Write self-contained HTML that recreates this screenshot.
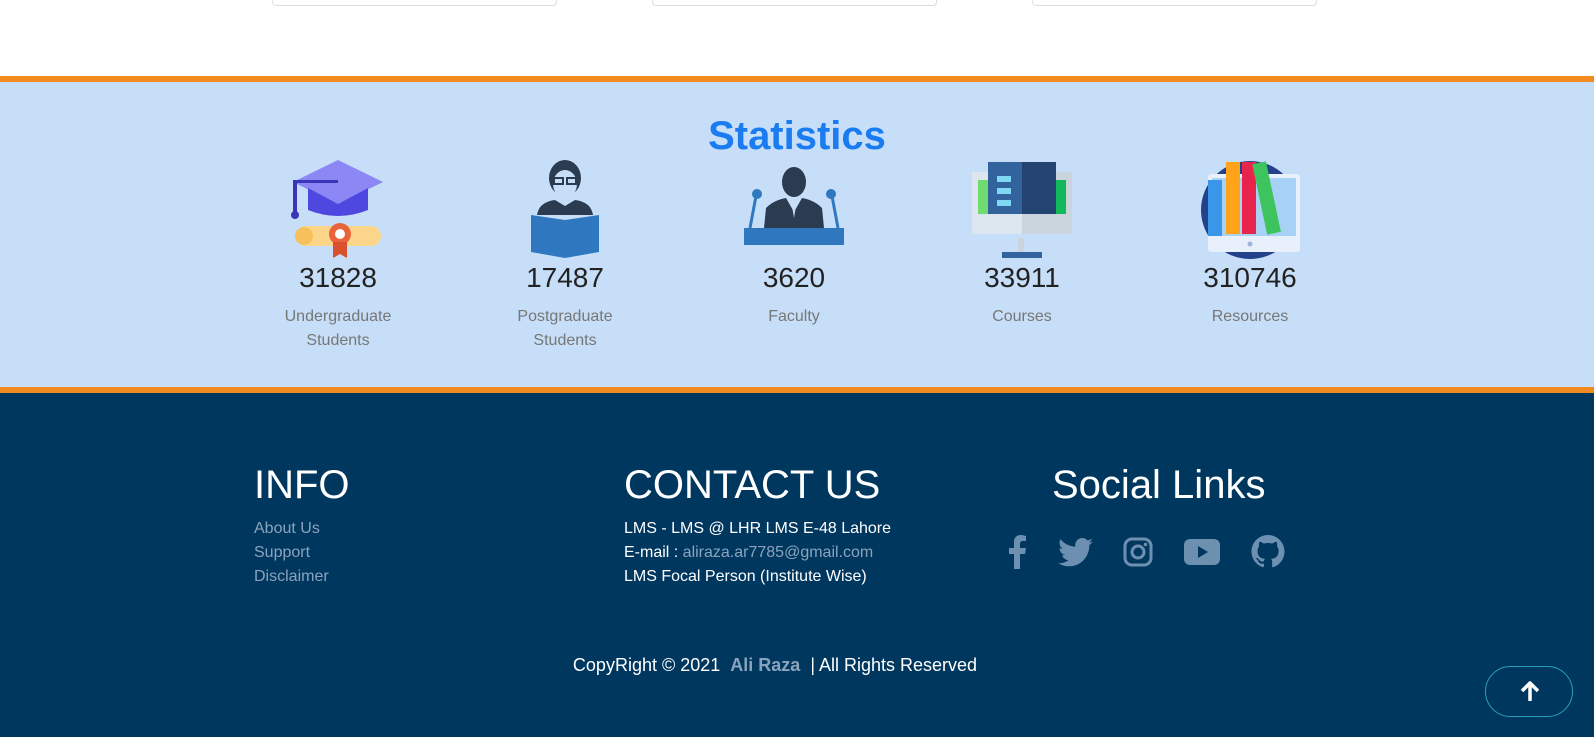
<!DOCTYPE html>
<html><head><meta charset="utf-8"><style>
*{margin:0;padding:0;box-sizing:border-box}
body{width:1594px;height:737px;overflow:hidden;font-family:"Liberation Sans",sans-serif;background:#fff;position:relative}
.card{position:absolute;top:-2px;height:8px;border:1px solid #ddd;border-top:none;border-radius:0 0 4px 4px;background:#fff}
.stats{position:absolute;top:76px;left:0;width:1594px;height:317px;background:#c6def7;border-top:6px solid #f28a1f;border-bottom:6px solid #f28a1f}
.title{position:absolute;top:32px;width:100%;text-align:center;color:#1a7cf0;font-weight:bold;font-size:40px}
.col{position:absolute;top:78px;width:200px;text-align:center}
.col svg{display:block;margin:0 auto;width:100px;height:100px}
.num{font-size:28px;color:#222;margin-top:2px;height:36px}
.lbl{font-size:16px;color:#777;line-height:24px;margin-top:7px}
.foot{position:absolute;top:393px;left:0;width:1594px;height:344px;background:#00375f;color:#fff}
h2{position:absolute;font-weight:normal;font-size:40px;top:70px}
.links{position:absolute;top:124px;font-size:16px;line-height:24px}
.links a{color:#8aa3bd;display:block;text-decoration:none}
.ic{position:absolute;top:142px}
.copy{position:absolute;top:262px;width:100%;text-align:center;font-size:18px;padding-right:44px}
.btn{position:absolute;left:1485px;top:273px;width:88px;height:51px;border:1px solid #2aa0b8;border-radius:26px}
</style></head><body>
<div class="card" style="left:272px;width:285px"></div>
<div class="card" style="left:652px;width:285px"></div>
<div class="card" style="left:1032px;width:285px"></div>
<div class="stats">
<div class="title">Statistics</div>
<div class="col" style="left:238px"><svg viewBox="0 0 100 100"><polygon points="50,0 95,22 50,44 5,22" fill="#8c87f5"/><path d="M20 28 L20 50 Q50 62 80 50 L80 28 L50 44Z" fill="#4e48e0"/><rect x="5" y="20" width="45" height="3" fill="#3b35b8"/><rect x="5" y="20" width="4" height="35" fill="#3b35b8"/><circle cx="7" cy="55" r="4" fill="#3b35b8"/><rect x="8" y="66" width="85" height="20" rx="10" fill="#fbd68a"/><circle cx="16" cy="76" r="9" fill="#f6c05a"/><circle cx="52" cy="74" r="11" fill="#e9643c"/><circle cx="52" cy="74" r="5" fill="#fff"/><path d="M45 82 L45 98 L52 94 L59 98 L59 82Z" fill="#d9502c"/></svg><div class="num">31828</div><div class="lbl">Undergraduate<br>Students</div></div>
<div class="col" style="left:465px"><svg viewBox="0 0 100 100"><ellipse cx="50" cy="18" rx="16" ry="18" fill="#2b3b50"/><ellipse cx="50" cy="24" rx="12" ry="14" fill="#c6def7"/><rect x="39" y="18" width="9" height="6" fill="none" stroke="#2b3b50" stroke-width="2"/><rect x="52" y="18" width="9" height="6" fill="none" stroke="#2b3b50" stroke-width="2"/><path d="M22 55 Q24 42 40 40 L50 46 L60 40 Q76 42 78 55Z" fill="#2b3b50"/><path d="M16 55 L50 60 L84 55 L84 92 L50 98 L16 92Z" fill="#2f78c0"/></svg><div class="num">17487</div><div class="lbl">Postgraduate<br>Students</div></div>
<div class="col" style="left:694px"><svg viewBox="0 0 100 100"><ellipse cx="50" cy="22" rx="12" ry="15" fill="#2b3b50"/><path d="M20 68 L22 48 Q30 40 42 38 L50 52 L58 38 Q70 40 78 48 L80 68Z" fill="#2b3b50"/><path d="M47 40 L50 58 L53 40" fill="#c6def7"/><path d="M6 68 L12 36 M94 68 L88 36" stroke="#2f78c0" stroke-width="3"/><circle cx="13" cy="34" r="5" fill="#2f78c0"/><circle cx="87" cy="34" r="5" fill="#2f78c0"/><rect x="0" y="68" width="100" height="17" fill="#2f78c0"/></svg><div class="num">3620</div><div class="lbl">Faculty</div></div>
<div class="col" style="left:922px"><svg viewBox="0 0 100 100"><rect x="0" y="12" width="100" height="62" fill="#dbe6ee"/><rect x="50" y="12" width="50" height="62" fill="#c9d4dc"/><rect x="6" y="20" width="88" height="34" fill="#6fdc6f"/><rect x="50" y="20" width="44" height="34" fill="#12b859"/><rect x="16" y="2" width="34" height="52" fill="#33639c"/><rect x="50" y="2" width="34" height="52" fill="#234470"/><rect x="25" y="16" width="14" height="6" fill="#7fd9f5"/><rect x="25" y="28" width="14" height="6" fill="#7fd9f5"/><rect x="25" y="40" width="14" height="6" fill="#7fd9f5"/><rect x="46" y="78" width="6" height="14" fill="#c9d4dc"/><rect x="30" y="92" width="40" height="6" fill="#33639c"/></svg><div class="num">33911</div><div class="lbl">Courses</div></div>
<div class="col" style="left:1150px"><svg viewBox="0 0 100 100"><circle cx="50" cy="50" r="49" fill="#23408a"/><rect x="8" y="14" width="92" height="78" rx="3" fill="#e8f0fb"/><rect x="12" y="18" width="84" height="58" fill="#a8d2f5"/><rect x="8" y="20" width="14" height="56" fill="#3a96e8"/><rect x="26" y="2" width="14" height="72" fill="#ffa31a"/><rect x="42" y="2" width="14" height="72" fill="#e8244c"/><rect x="60" y="2" width="14" height="72" fill="#3ec45e" transform="rotate(-12 67 40)"/><circle cx="50" cy="84" r="2.5" fill="#9db3d8"/></svg><div class="num">310746</div><div class="lbl">Resources</div></div>
</div>
<div class="foot">
<h2 style="left:254px">INFO</h2>
<div class="links" style="left:254px"><a>About Us</a><a>Support</a><a>Disclaimer</a></div>
<h2 style="left:624px">CONTACT US</h2>
<div class="links" style="left:624px">LMS - LMS @ LHR LMS E-48 Lahore<br>E-mail : <span style="color:#8aa3bd">aliraza.ar7785@gmail.com</span><br>LMS Focal Person (Institute Wise)</div>
<h2 style="left:1052px">Social Links</h2>
<svg class="ic" style="left:1006px" width="22" height="34" viewBox="0 0 22 34"><path d="M14 34V19h5l1-6h-6V9c0-2 1-3 3-3h3V1c-1 0-3-1-5-1-5 0-7 3-7 7v6H3v6h5v15z" fill="#6e90b0"/></svg>
<svg class="ic" style="left:1058px;top:145px" width="35" height="29" viewBox="0 0 24 20"><path d="M24 2.3c-.9.4-1.8.7-2.8.8 1-.6 1.8-1.6 2.2-2.7-1 .6-2 1-3.1 1.2A4.9 4.9 0 0 0 11.9 6 14 14 0 0 1 1.7.9a4.9 4.9 0 0 0 1.5 6.6c-.8 0-1.6-.3-2.2-.6 0 2.4 1.7 4.4 3.9 4.8-.7.2-1.5.2-2.2.1.6 2 2.4 3.4 4.6 3.4A9.900 9.900 0 0 1 0 17.3 14 14 0 0 0 7.5 19.5c9 0 14-7.500 14-14v-.6c1-.7 1.800-1.600 2.500-2.600z" fill="#6e90b0"/></svg>
<svg class="ic" style="left:1123px;top:144px" width="30" height="30" viewBox="0 0 30 30"><rect x="2" y="2" width="26" height="26" rx="7" fill="none" stroke="#6e90b0" stroke-width="3"/><circle cx="15" cy="15" r="6" fill="none" stroke="#6e90b0" stroke-width="3"/><circle cx="22.500" cy="7.500" r="1.800" fill="#6e90b0"/></svg>
<svg class="ic" style="left:1184px;top:146px" width="36" height="26" viewBox="0 0 36 26"><rect width="36" height="26" rx="6" fill="#6e90b0"/><path d="M14 7v12l10-6z" fill="#00375f"/></svg>
<svg class="ic" style="left:1251px;top:142px" width="34" height="33" viewBox="0 0 16 16"><path d="M8 0C3.58 0 0 3.58 0 8c0 3.54 2.29 6.53 5.47 7.590.4.07.55-.17.55-.38v-1.340c-2.230.49-2.690-1.070-2.690-1.070-.36-.92-.89-1.170-.89-1.170-.73-.5.06-.49.06-.49.8.06 1.230.830 1.230.830.710 1.230 1.880.870 2.340.670.07-.52.28-.87.51-1.070-1.780-.2-3.640-.89-3.640-3.950 0-.87.31-1.590.82-2.150-.08-.2-.36-1.020.08-2.120 0 0 .67-.21 2.200.82a7.600 7.600 0 0 1 4 0c1.530-1.040 2.200-.82 2.200-.82.44 1.100.16 1.920.08 2.120.51.56.82 1.270.82 2.150 0 3.070-1.870 3.750-3.650 3.950.29.250.54.730.54 1.480v2.200c0 .21.15.46.55.38A8 8 0 0 0 16 8c0-4.420-3.580-8-8-8z" fill="#6e90b0"/></svg>
<div class="copy">CopyRight © 2021 &nbsp;<b style="color:#8aa3bd">Ali Raza</b> &nbsp;| All Rights Reserved</div>
<div class="btn"><svg style="position:absolute;left:34px;top:14px" width="20" height="22" viewBox="0 0 20 22"><path d="M10 2 L10 20 M2 10 L10 2 L18 10" stroke="#fff" stroke-width="3.500" fill="none" stroke-linejoin="round"/></svg></div>
</div>
</body></html>
